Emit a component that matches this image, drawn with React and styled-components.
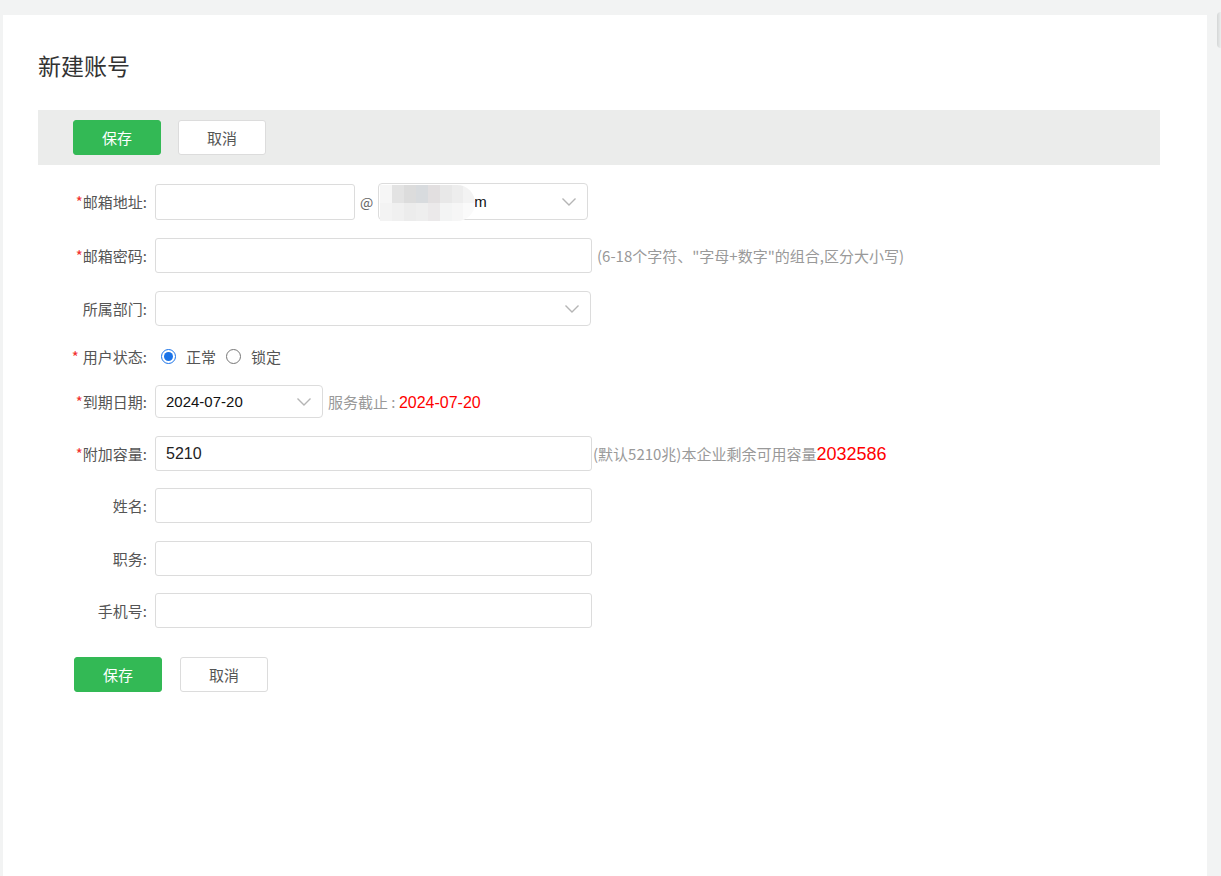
import { useState } from 'react';
import styled, { createGlobalStyle } from 'styled-components';

const GlobalStyle = createGlobalStyle`
  html, body {
    margin: 0;
    padding: 0;
    background: #f2f3f3;
    font-family: "Microsoft YaHei", "Noto Sans CJK SC", "Liberation Sans", sans-serif;
  }
  * { box-sizing: border-box; }
`;

const Page = styled.div`
  display: flex;
  min-height: 876px;
  padding: 15px 0 0 3px;
  position: relative;
`;

const Panel = styled.div`
  width: 1204px;
  min-height: 861px;
  background: #fff;
  padding: 35px 47px 0 35px;
`;

const EdgeShade = styled.div`
  position: absolute;
  right: 0;
  top: 12px;
  width: 4px;
  height: 36px;
  border-radius: 4px 0 0 4px;
  background: linear-gradient(to right, #d4d6d6, #eceeee);
`;

const Title = styled.h1`
  margin: 0 0 30px;
  height: 30px;
  font-size: 23px;
  font-weight: normal;
  color: #333;
  line-height: 30px;
`;

const Toolbar = styled.div`
  display: flex;
  align-items: center;
  gap: 17px;
  height: 55px;
  padding-left: 35px;
  background: #ebeceb;
`;

const Button = styled.button`
  width: 88px;
  height: 35px;
  border-radius: 3px;
  font-family: inherit;
  font-size: 15px;
  cursor: pointer;
  border: 1px solid ${({ $primary }) => ($primary ? '#33b955' : '#dcdcdc')};
  background: ${({ $primary }) => ($primary ? '#33b955' : '#fff')};
  color: ${({ $primary }) => ($primary ? '#fff' : '#555')};
`;

const Form = styled.div`
  display: flex;
  flex-direction: column;
  padding-top: 18px;
`;

const Row = styled.div`
  display: flex;
  align-items: center;
  height: ${({ $h }) => $h}px;
  margin-top: ${({ $mt }) => $mt || 0}px;
`;

const Label = styled.label`
  width: 109px;
  margin-right: 8px;
  text-align: right;
  font-size: 15px;
  color: #555;
  white-space: nowrap;
`;

const Star = styled.span`
  color: #f23030;
  margin-right: ${({ $gap }) => ($gap ? '4px' : '0')};
`;

const Input = styled.input`
  width: ${({ $w }) => $w}px;
  height: ${({ $h }) => $h || 35}px;
  border: 1px solid #dcdcdc;
  border-radius: 3px;
  padding: 0 10px;
  font-family: "Liberation Sans", "Noto Sans CJK SC", sans-serif;
  font-size: 16px;
  color: #222;
  outline: none;
`;

const SelectBox = styled.div`
  position: relative;
  display: flex;
  align-items: center;
  width: ${({ $w }) => $w}px;
  height: ${({ $h }) => $h || 35}px;
  border: 1px solid #dcdcdc;
  border-radius: 4px;
  padding: 0 10px;
  font-family: "Liberation Sans", sans-serif;
  font-size: ${({ $fs }) => $fs || 14}px;
  color: #111;
  background: #fff;
`;

const SelectText = styled.span`
  flex: 1;
  padding-left: ${({ $pad }) => $pad || 0}px;
`;

const Chevron = () => (
  <svg width="16" height="10" viewBox="0 0 16 10" fill="none">
    <path d="M1.5 1.5 L8 8 L14.5 1.5" stroke="#b5b5b5" strokeWidth="1.4" />
  </svg>
);

const At = styled.span`
  margin: 0 5px 0 5px;
  font-size: 14px;
  color: #666;
`;

const Mosaic = styled.div`
  position: absolute;
  left: 1px;
  top: 1px;
  width: 95px;
  height: 36px;
  display: grid;
  grid-template-columns: repeat(8, 1fr);
  grid-template-rows: 1fr 1fr;
  border-radius: 0 18px 18px 0;
  overflow: hidden;
`;

const Tile = styled.div`
  background: ${({ $c }) => $c};
`;

const Hint = styled.span`
  margin-left: ${({ $ml }) => ($ml === undefined ? 5 : $ml)}px;
  font-size: 15px;
  color: #999;
  white-space: nowrap;
`;

const Red = styled.span`
  color: #f00;
  font-size: ${({ $fs }) => $fs || 14}px;
  font-family: "Liberation Sans", sans-serif;
`;

const Radios = styled.div`
  display: flex;
  align-items: center;
  margin-left: 4px;
  font-size: 15px;
  color: #555;
`;

const Radio = styled.input`
  margin: 0 10px 0 2px;
  width: 15px;
  height: 15px;
  accent-color: #1a73e8;
`;

const RadioText = styled.span`
  margin-right: 8px;
`;

const Footer = styled.div`
  display: flex;
  gap: 18px;
  margin: 29px 0 0 36px;
`;

const topTiles = ['#f6f6f6', '#e3e3e3', '#dcdcdc', '#d8dbde', '#e2dfe0', '#e8e8e8', '#ededed', '#f3f3f3'];
const bottomTiles = ['#f3f3f3', '#f0f0f0', '#ececec', '#eeeeee', '#ebe9ea', '#f3f4f4', '#f6f6f6', '#fafafa'];

const App = () => {
  const [status, setStatus] = useState('normal');

  return (
    <>
      <GlobalStyle />
      <Page>
        <Panel>
          <Title>新建账号</Title>
          <Toolbar>
            <Button $primary>保存</Button>
            <Button>取消</Button>
          </Toolbar>
          <Form>
            <Row $h={37}>
              <Label><Star>*</Star>邮箱地址:</Label>
              <Input $w={200} $h={36} />
              <At>@</At>
              <SelectBox $w={210} $h={37} $fs={15}>
                <Mosaic>
                  {topTiles.concat(bottomTiles).map((c, i) => (
                    <Tile key={i} $c={c} />
                  ))}
                </Mosaic>
                <SelectText $pad={85}>m</SelectText>
                <Chevron />
              </SelectBox>
            </Row>
            <Row $h={35} $mt={18}>
              <Label><Star>*</Star>邮箱密码:</Label>
              <Input $w={437} type="password" />
              <Hint>(6-18个字符、"字母+数字"的组合,区分大小写)</Hint>
            </Row>
            <Row $h={35} $mt={18}>
              <Label>所属部门:</Label>
              <SelectBox $w={436}>
                <SelectText />
                <Chevron />
              </SelectBox>
            </Row>
            <Row $h={26} $mt={17}>
              <Label><Star $gap>*</Star>用户状态:</Label>
              <Radios>
                <Radio type="radio" name="status" checked={status === 'normal'} onChange={() => setStatus('normal')} />
                <RadioText>正常</RadioText>
                <Radio type="radio" name="status" checked={status === 'lock'} onChange={() => setStatus('lock')} />
                <RadioText>锁定</RadioText>
              </Radios>
            </Row>
            <Row $h={33} $mt={16}>
              <Label><Star>*</Star>到期日期:</Label>
              <SelectBox $w={168} $h={33} $fs={15}>
                <SelectText>2024-07-20</SelectText>
                <Chevron />
              </SelectBox>
              <Hint>服务截止 : <Red $fs={16}>2024-07-20</Red></Hint>
            </Row>
            <Row $h={35} $mt={18}>
              <Label><Star>*</Star>附加容量:</Label>
              <Input $w={437} defaultValue="5210" />
              <Hint $ml={1}>(默认5210兆)本企业剩余可用容量<Red $fs={18}>2032586</Red></Hint>
            </Row>
            <Row $h={35} $mt={17}>
              <Label>姓名:</Label>
              <Input $w={437} />
            </Row>
            <Row $h={35} $mt={18}>
              <Label>职务:</Label>
              <Input $w={437} />
            </Row>
            <Row $h={35} $mt={17}>
              <Label>手机号:</Label>
              <Input $w={437} />
            </Row>
          </Form>
          <Footer>
            <Button $primary>保存</Button>
            <Button>取消</Button>
          </Footer>
        </Panel>
        <EdgeShade />
      </Page>
    </>
  );
};

export default App;
